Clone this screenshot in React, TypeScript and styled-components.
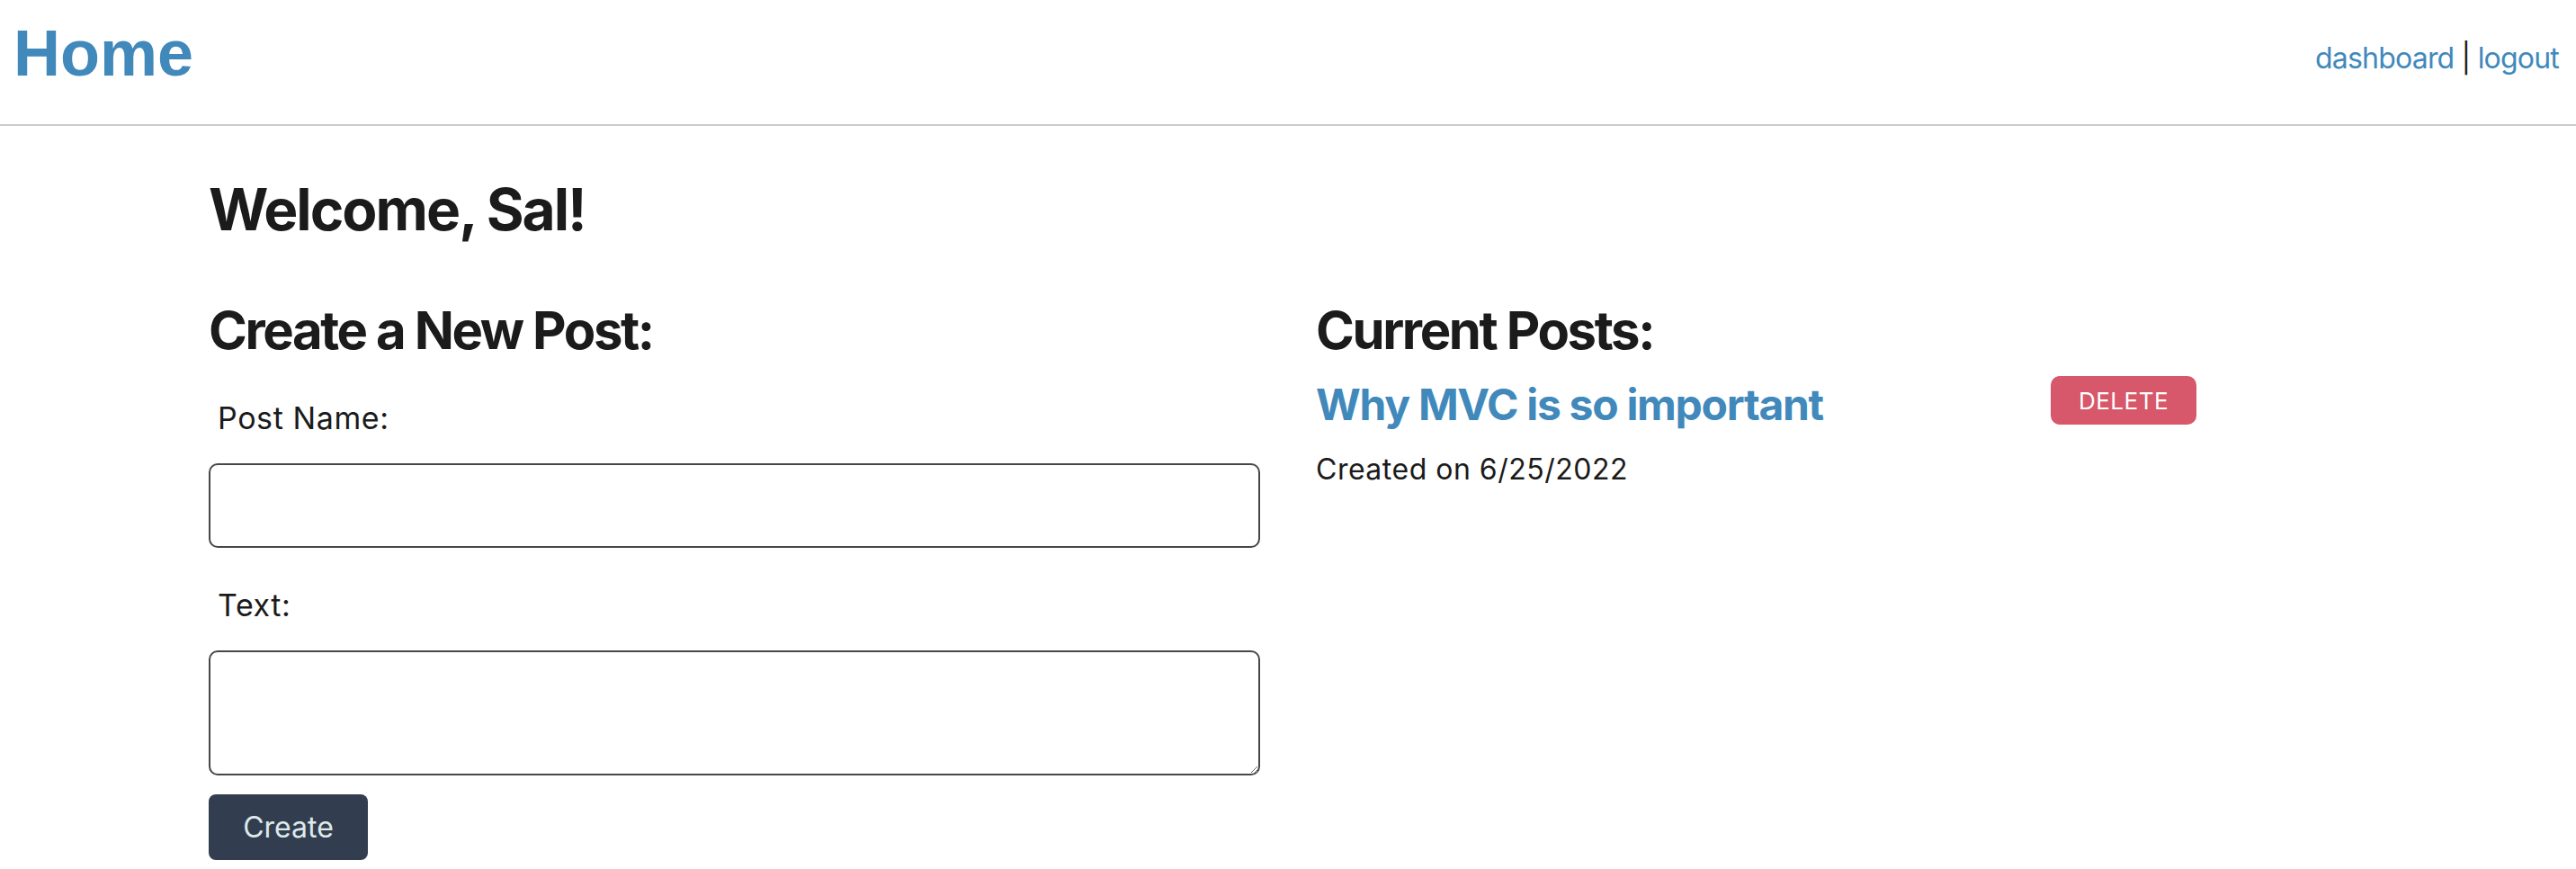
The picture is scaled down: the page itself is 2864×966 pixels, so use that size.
import React from "react";
import styled, { createGlobalStyle } from "styled-components";

const GlobalStyle = createGlobalStyle`
  html, body {
    margin: 0;
    padding: 0;
    background: #ffffff;
  }
  body {
    font-family: Inter, "Noto Sans", sans-serif;
    color: #1b1b1b;
  }
  * { box-sizing: border-box; }
`;

const Header = styled.header`
  display: flex;
  justify-content: space-between;
  align-items: flex-start;
  height: 140px;
  padding: 0 19px 0 15px;
  border-bottom: 2px solid #cccccc;
`;

const Brand = styled.a`
  margin-top: 19px;
  font-family: "Liberation Sans", Arial, sans-serif;
  font-weight: 700;
  font-size: 72px;
  line-height: 80px;
  color: #4189bb;
  text-decoration: none;
`;

const Nav = styled.nav`
  margin-top: 45px;
  font-size: 32px;
  line-height: 40px;
  letter-spacing: -0.8px;
  color: #1b1b1b;
`;

const NavLink = styled.a`
  color: #4189bb;
  text-decoration: none;
`;

const Main = styled.main`
  padding: 54px 232px 0;
`;

const Welcome = styled.h2`
  margin: 0;
  font-size: 64px;
  line-height: 77px;
  font-weight: 700;
  letter-spacing: -2px;
  color: #1b1b1b;
`;

const Columns = styled.div`
  display: grid;
  grid-template-columns: 1169px 1fr;
  column-gap: 62px;
  margin-top: 61px;
`;

const Column = styled.section`
  display: flex;
  flex-direction: column;
  align-items: flex-start;
`;

const SectionTitle = styled.h3`
  margin: 0;
  font-size: 58px;
  line-height: 70px;
  font-weight: 700;
  letter-spacing: -2.4px;
  color: #1b1b1b;
`;

const Form = styled.form`
  display: flex;
  flex-direction: column;
  align-items: flex-start;
  width: 100%;
  margin-top: 43px;
`;

const Label = styled.label<{ $gap?: number }>`
  margin-top: ${(p) => p.$gap ?? 0}px;
  padding-left: 10px;
  font-size: 34px;
  line-height: 40px;
  letter-spacing: 0.6px;
  color: #1b1b1b;
`;

const fieldStyles = `
  width: 100%;
  margin-top: 30px;
  border: 2px solid #474747;
  border-radius: 10px;
  background: #ffffff;
  font-family: Inter, sans-serif;
  font-size: 32px;
  padding: 8px 12px;
  outline: none;
`;

const Input = styled.input`
  ${fieldStyles}
  height: 94px;
`;

const TextArea = styled.textarea`
  ${fieldStyles}
  height: 139px;
  resize: both;
  display: block;
`;

const CreateButton = styled.button`
  margin-top: 21px;
  width: 177px;
  height: 73px;
  border: none;
  border-radius: 8px;
  background: #323e4f;
  color: #dde9ea;
  font-family: Inter, sans-serif;
  font-size: 32px;
  cursor: pointer;
`;

const PostRow = styled.div`
  display: flex;
  justify-content: space-between;
  align-items: flex-start;
  width: 979px;
  margin-top: 16px;
`;

const PostTitle = styled.a`
  margin-top: 3px;
  font-size: 48px;
  line-height: 58px;
  font-weight: 700;
  letter-spacing: -1.3px;
  color: #4189bb;
  text-decoration: none;
`;

const DeleteButton = styled.button`
  width: 162px;
  height: 54px;
  border: none;
  border-radius: 10px;
  background: #d6586a;
  color: #ffffff;
  font-family: Inter, sans-serif;
  font-size: 26px;
  letter-spacing: 0.5px;
  cursor: pointer;
`;

const PostDate = styled.p`
  margin: 23px 0 0;
  font-size: 32px;
  line-height: 40px;
  letter-spacing: 0.5px;
  color: #1b1b1b;
`;

export default function App() {
  return (
    <>
      <GlobalStyle />
      <Header>
        <Brand href="#">Home</Brand>
        <Nav>
          <NavLink href="#">dashboard</NavLink> | <NavLink href="#">logout</NavLink>
        </Nav>
      </Header>
      <Main>
        <Welcome>Welcome, Sal!</Welcome>
        <Columns>
          <Column>
            <SectionTitle>Create a New Post:</SectionTitle>
            <Form onSubmit={(e) => e.preventDefault()}>
              <Label htmlFor="post-name">Post Name:</Label>
              <Input id="post-name" type="text" />
              <Label htmlFor="post-text" $gap={44}>Text:</Label>
              <TextArea id="post-text" />
              <CreateButton type="submit">Create</CreateButton>
            </Form>
          </Column>
          <Column>
            <SectionTitle>Current Posts:</SectionTitle>
            <PostRow>
              <PostTitle href="#">Why MVC is so important</PostTitle>
              <DeleteButton type="button">DELETE</DeleteButton>
            </PostRow>
            <PostDate>Created on 6/25/2022</PostDate>
          </Column>
        </Columns>
      </Main>
    </>
  );
}
